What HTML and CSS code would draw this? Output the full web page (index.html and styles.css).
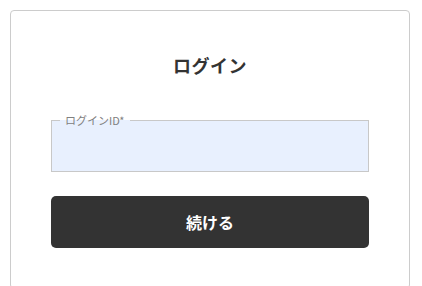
FILE: index.html
```html
<!DOCTYPE html>
<html lang="ja">
<head>
    <meta charset="UTF-8">
    <meta name="viewport" content="width=device-width, initial-scale=1.0">
    <title>ログイン</title>
    <link rel="stylesheet" href="styles.css">
</head>
<body>
    <div class="card">
        <h1>ログイン</h1>
        <form class="login-form">
            <fieldset class="field">
                <legend>ログインID*</legend>
                <input type="text" name="loginId">
            </fieldset>
            <button type="button" class="submit-button">続ける</button>
        </form>
    </div>
</body>
</html>
```

FILE: styles.css
```css
body {
    font-family: "Noto Sans CJK JP", "Noto Sans", sans-serif;
    margin: 0;
    padding: 10px;
    background-color: white;
}
.card {
    width: 400px;
    box-sizing: border-box;
    border: 1px solid #ccc;
    border-radius: 4px;
    padding: 40px;
}
h1 {
    margin: 0;
    font-size: 18px;
    line-height: 28px;
    font-weight: bold;
    text-align: center;
    color: #333;
    letter-spacing: 0.5px;
}
.login-form {
    margin-top: 35px;
}
.field {
    margin: 0;
    padding: 0 8px;
    border: 1px solid #c8c8c8;
    background-color: #e8f0fe;
}
.field legend {
    padding: 0 5px;
    font-size: 11px;
    line-height: 12px;
    color: #808080;
}
.field input {
    display: block;
    width: 100%;
    height: 45px;
    box-sizing: border-box;
    border: none;
    background: transparent;
    outline: none;
    font-size: 14px;
}
.submit-button {
    display: block;
    width: 100%;
    height: 52px;
    margin-top: 24px;
    border: none;
    border-radius: 5px;
    background-color: #333;
    color: white;
    font-family: inherit;
    font-size: 16px;
    font-weight: bold;
    cursor: pointer;
}
```
